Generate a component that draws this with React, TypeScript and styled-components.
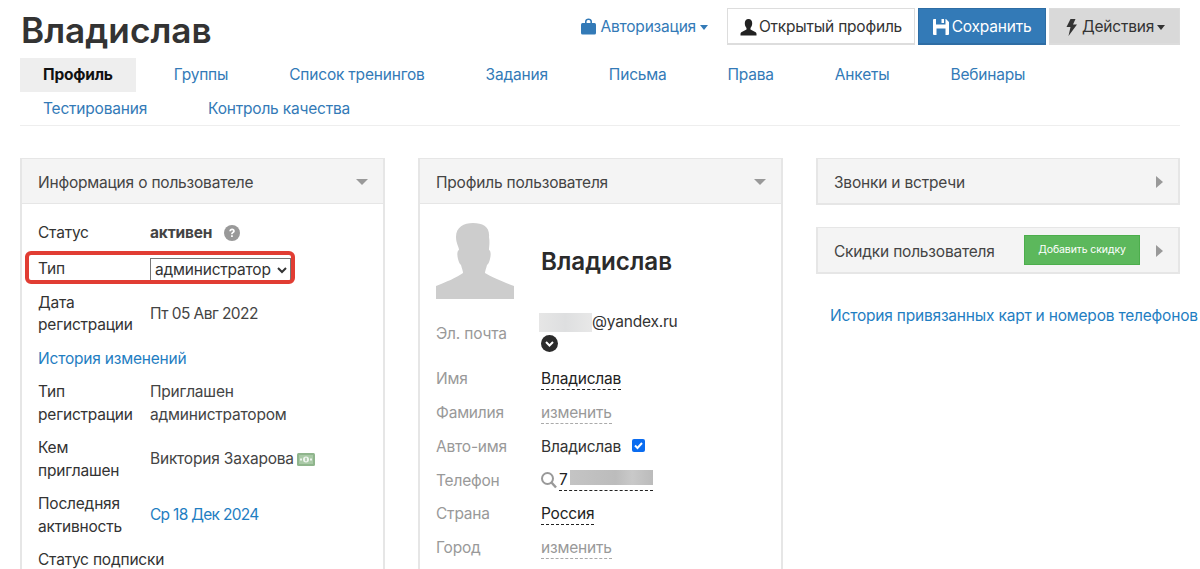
import React from "react";
import styled, { createGlobalStyle } from "styled-components";

const Global = createGlobalStyle`
  html, body { margin: 0; padding: 0; background: #fff; height: 569px; overflow: hidden; }
  body { font-family: Inter, "Noto Sans", sans-serif; font-size: 15.5px; line-height: 22.5px; letter-spacing: -0.2px; color: #333; }
`;

const Page = styled.div`
  width: 1200px;
  height: 569px;
  overflow: hidden;
  padding: 0 20px;
  box-sizing: border-box;
`;
const Header = styled.header`
  display: flex;
  justify-content: space-between;
  align-items: flex-start;
  height: 58px;
`;
const Title = styled.h1`
  margin: 9px 0 0 1px;
  font-size: 35.2px;
  line-height: 42px;
  font-weight: 600;
  letter-spacing: 0;
  color: #333;
`;
const Actions = styled.div`
  display: flex;
  align-items: center;
  padding-top: 8px;
  gap: 3px;
`;
const AuthLink = styled.a`
  display: flex;
  align-items: center;
  gap: 4px;
  color: #337ab7;
  margin-right: 16px;
  padding-top: 1px;
`;
const Caret = styled.span<{ $ml?: number }>`
  display: inline-block;
  width: 0;
  height: 0;
  margin-left: ${p => p.$ml ?? 3}px;
  vertical-align: 2px;
  border-left: 4.5px solid transparent;
  border-right: 4.5px solid transparent;
  border-top: 5px solid currentColor;
`;
const Btn = styled.button<{ $kind: "white" | "blue" | "grey"; $w: number }>`
  display: flex;
  align-items: center;
  justify-content: ${p => (p.$kind === "grey" ? "flex-start" : "center")};
  gap: ${p => (p.$kind === "grey" ? 5 : p.$kind === "blue" ? 3 : 2)}px;
  width: ${p => p.$w}px;
  height: 37px;
  padding: 2px 0 0 ${p => (p.$kind === "grey" ? 16 : 0)}px;
  box-sizing: border-box;
  font: inherit;
  letter-spacing: -0.2px;
  border-radius: 0;
  color: ${p => (p.$kind === "blue" ? "#fff" : "#333")};
  background: ${p => (p.$kind === "blue" ? "#337ab7" : p.$kind === "grey" ? "#d9d9d9" : "#fff")};
  border: 1px solid ${p => (p.$kind === "blue" ? "#2e6da4" : p.$kind === "grey" ? "#dcdcdc" : "#ddd")};
  border-bottom-width: 2px;
`;
const Tabs = styled.nav`
  display: flex;
  flex-wrap: wrap;
  border-bottom: 1px solid #eee;
  height: 68px;
  box-sizing: border-box;
  align-content: flex-start;
`;
const Tab = styled.a<{ $active?: boolean }>`
  display: block;
  height: 34px;
  line-height: 34px;
  padding: 0 23px;
  margin-right: 15px;
  box-sizing: border-box;
  white-space: nowrap;
  color: ${p => (p.$active ? "#111" : "#337ab7")};
  background: ${p => (p.$active ? "#eee" : "transparent")};
  font-weight: ${p => (p.$active ? 700 : 400)};
`;
const Columns = styled.div`
  display: flex;
  gap: 33px;
  margin-top: 32px;
  align-items: flex-start;
`;
const Column = styled.div<{ $w: number }>`
  width: ${p => p.$w}px;
  flex: none;
`;
const Panel = styled.section`
  border-style: solid;
  border-width: 1px 2px 2px;
  border-color: #e6e6e6;
  box-sizing: border-box;
  margin-bottom: 22px;
`;
const PanelHead = styled.div`
  display: flex;
  align-items: center;
  height: 44px;
  padding: 4px 16px 0;
  box-sizing: border-box;
  background: #f4f4f4;
  color: #444;
`;
const HeadTitle = styled.span`
  flex: 1;
`;
const DownArrow = styled.span`
  width: 0;
  height: 0;
  margin: -2px -1px 0 0;
  border-left: 6.5px solid transparent;
  border-right: 6.5px solid transparent;
  border-top: 6.5px solid #999;
`;
const RightArrow = styled.span`
  width: 0;
  height: 0;
  margin: -3px -1px 0 0;
  border-top: 6.5px solid transparent;
  border-bottom: 6.5px solid transparent;
  border-left: 7px solid #999;
`;
const PanelBody = styled.div`
  border-top: 1px solid #e6e6e6;
  padding: 18px 16px 0;
  height: 400px;
  position: relative;
`;
const InfoRow = styled.div<{ $mt?: number }>`
  display: grid;
  grid-template-columns: 112px 1fr;
  align-items: center;
  margin-top: ${p => p.$mt ?? 11}px;
`;
const InfoLabel = styled.div``;
const SubStatus = styled.div`
  margin-top: 11px;
`;
const InfoValue = styled.div<{ $link?: boolean; $bold?: boolean; $ls?: number }>`
  display: flex;
  align-items: center;
  color: ${p => (p.$link ? "#1f7ec2" : "#444")};
  font-weight: ${p => (p.$bold ? 700 : 400)};
  letter-spacing: ${p => p.$ls ?? -0.2}px;
`;
const Link = styled.a<{ $mt?: number; $ml?: number }>`
  display: block;
  color: #1f7ec2;
  margin-top: ${p => p.$mt ?? 11}px;
  margin-left: ${p => p.$ml ?? 0}px;
  white-space: nowrap;
`;
const TypeSelect = styled.select`
  width: 141px;
  height: 24px;
  font: inherit;
  letter-spacing: -0.2px;
  color: #333;
  background: #fff;
  padding: 0;
  border: 1px solid #767676;
  border-radius: 0;
`;
const Highlight = styled.div`
  position: absolute;
  left: 3px;
  top: 47px;
  width: 262px;
  height: 25px;
  border: 4px solid #e13d33;
  border-radius: 6px;
  pointer-events: none;
`;
const HelpIcon = styled.span`
  display: inline-flex;
  margin-left: 12px;
`;
const ProfileTop = styled.div`
  display: flex;
  align-items: center;
  gap: 27px;
  margin: 1px 0 1.5px;
`;
const ProfileName = styled.div`
  font-size: 24.2px;
  line-height: 30px;
  font-weight: 600;
  letter-spacing: 0;
  color: #2b2b2b;
  margin-top: 2px;
`;
const FieldRow = styled.div<{ $h?: number }>`
  display: grid;
  grid-template-columns: 105px 1fr;
  align-items: center;
  min-height: ${p => p.$h ?? 33.8}px;
`;
const FieldLabel = styled.div<{ $pt?: number }>`
  color: #999;
  padding-top: ${p => p.$pt ?? 0}px;
`;
const FieldValue = styled.div`
  display: flex;
  align-items: center;
  color: #333;
`;
const Editable = styled.span<{ $muted?: boolean }>`
  color: ${p => (p.$muted ? "#999" : "#222")};
  border-bottom: 1px dashed ${p => (p.$muted ? "#aaa" : "#222")};
  line-height: 20px;
`;
const EmailBox = styled.div`
  display: flex;
  flex-direction: column;
  align-items: flex-start;
`;
const Blur = styled.span<{ $w: number; $h: number; $bg: string; $ml?: number }>`
  display: inline-block;
  width: ${p => p.$w}px;
  height: ${p => p.$h}px;
  margin-left: ${p => p.$ml ?? 0}px;
  background: ${p => p.$bg};
`;
const CircleBtn = styled.span`
  display: flex;
  margin-top: 1px;
`;
const Check = styled.span`
  display: inline-flex;
  align-items: center;
  justify-content: center;
  width: 13px;
  height: 13px;
  margin-left: 11px;
  margin-top: -3px;
  border-radius: 2px;
  background: #0a6cf0;
`;
const GreenBtn = styled.button`
  width: 116px;
  height: 30px;
  margin: -4px 16px 0 0;
  padding: 0;
  font: inherit;
  font-size: 10.5px;
  letter-spacing: -0.1px;
  color: #fff;
  background: #5cb85c;
  border: 1px solid #4cae4c;
  border-radius: 0;
`;

const Lock = () => (
  <svg width="15" height="18" viewBox="0 0 15 18" fill="#337ab7">
    <path d="M4 5V3.500C4 1.600 5.600 .5 7.500 .5S11 1.600 11 3.500V5H9.400V3.600C9.400 2.700 8.600 2.100 7.500 2.100S5.600 2.700 5.600 3.600V5z" />
    <rect x="0" y="5" width="15" height="11.500" rx="1.500" />
  </svg>
);
const UserIcon = () => (
  <svg width="17" height="17" viewBox="0 0 16 17" fill="#222">
    <path d="M8 0C5.500 0 4.300 1.800 4.300 4.200c0 2 .8 3.600 1.700 4.700v1.600L.8 13.200C.2 13.600 0 14.200 0 15v1.500h16V15c0-.8-.2-1.400-.8-1.800L10 10.500V8.900c.9-1.100 1.700-2.700 1.700-4.700C11.700 1.800 10.500 0 8 0z" />
  </svg>
);
const Floppy = () => (
  <svg width="16" height="16" viewBox="0 0 16 16" fill="#fff">
    <path fillRule="evenodd" d="M1 0h2v5.500h9.500V0h.5l3 3v12a1 1 0 0 1-1 1H1a1 1 0 0 1-1-1V1a1 1 0 0 1 1-1zM3.500 9.500V16h9V9.500zM8.500 0h2.500v4H8.500z" />
  </svg>
);
const Bolt = () => (
  <svg width="11" height="17" viewBox="0 0 11 17" fill="#333">
    <path d="M4.500 0H9.500L7 5.500H11L2.500 17L4.500 8H.5z" />
  </svg>
);
const Help = () => (
  <svg width="16" height="16" viewBox="0 0 16 16">
    <circle cx="8" cy="8" r="8" fill="#999" />
    <path d="M5.300 6.200C5.400 4.600 6.500 3.600 8.100 3.600c1.600 0 2.700 1 2.700 2.300 0 1.100-.6 1.600-1.300 2.100-.6.400-.8.700-.8 1.300H7.100c0-1.100.4-1.700 1.100-2.200.6-.4.9-.7.9-1.100 0-.5-.4-.8-1-.8-.7 0-1.100.4-1.200 1zM7.100 10.300h1.700V12H7.100z" fill="#fff" />
  </svg>
);
const Money = () => (
  <svg width="18" height="13" viewBox="0 0 18 13" style={{ marginLeft: 3 }}>
    <rect width="18" height="13" rx="1.500" fill="#8fb58c" />
    <rect x="2" y="2" width="14" height="9" fill="#a9c9a6" />
    <circle cx="9" cy="6.500" r="3" fill="#eef4ee" />
    <rect x="8.400" y="4.800" width="1.200" height="3.400" fill="#8fb58c" />
    <rect x="3" y="5.500" width="2" height="2" fill="#eef4ee" />
    <rect x="13" y="5.500" width="2" height="2" fill="#eef4ee" />
  </svg>
);
const Silhouette = () => (
  <svg width="78" height="76" viewBox="0 0 78 76" fill="#cdcdcd">
    <path d="M20 14C20 4 28 0 37 0C47 0 54 4 53 14C54 20 53 24 53 27C55 28 55 32 54 36C53 40 52 41 51 42C50 46 49 48 49 50C55 54 70 60 78 63V76H0V63C8 60 22 54 27 50C27 48 26 46 25 42C24 41 23 40 22 36C21 32 21 28 23 27C23 24 20 20 20 14z" />
  </svg>
);
const Chevron = () => (
  <svg width="17" height="17" viewBox="0 0 17 17">
    <circle cx="8.500" cy="8.500" r="8.500" fill="#2b2b2b" />
    <path d="M5 7l3.500 3.500L12 7" fill="none" stroke="#fff" strokeWidth="2" />
  </svg>
);
const Search = () => (
  <svg width="16" height="17" viewBox="0 0 16 17" fill="none" stroke="#999" strokeWidth="2" style={{ marginRight: 2 }}>
    <circle cx="6.500" cy="6.500" r="5.500" />
    <path d="M10.500 10.500l4.500 5" strokeWidth="2.500" />
  </svg>
);
const Tick = () => (
  <svg width="11" height="11" viewBox="0 0 11 11" fill="none" stroke="#fff" strokeWidth="2">
    <path d="M2 5.500l2.500 2.500L9 3" />
  </svg>
);

const tabs = ["Группы", "Список тренингов", "Задания", "Письма", "Права", "Анкеты", "Вебинары", "Тестирования", "Контроль качества"];

export default function App() {
  return (
    <Page>
      <Global />
      <Header>
        <Title>Владислав</Title>
        <Actions>
          <AuthLink><Lock />Авторизация<Caret $ml={0} /></AuthLink>
          <Btn $kind="white" $w={188}><UserIcon />Открытый профиль</Btn>
          <Btn $kind="blue" $w={128}><Floppy />Сохранить</Btn>
          <Btn $kind="grey" $w={131}><Bolt /><span>Действия<Caret /></span></Btn>
        </Actions>
      </Header>
      <Tabs>
        <Tab $active>Профиль</Tab>
        {tabs.map(t => <Tab key={t}>{t}</Tab>)}
      </Tabs>
      <Columns>
        <Column $w={365}>
          <Panel>
            <PanelHead><HeadTitle>Информация о пользователе</HeadTitle><DownArrow /></PanelHead>
            <PanelBody>
              <InfoRow $mt={0}><InfoLabel>Статус</InfoLabel><InfoValue $bold>активен<HelpIcon><Help /></HelpIcon></InfoValue></InfoRow>
              <InfoRow $mt={13}>
                <InfoLabel>Тип</InfoLabel>
                <InfoValue><TypeSelect defaultValue="a"><option value="a">администратор</option></TypeSelect></InfoValue>
              </InfoRow>
              <InfoRow $mt={10}><InfoLabel>Дата регистрации</InfoLabel><InfoValue $ls={-0.55}>Пт 05 Авг 2022</InfoValue></InfoRow>
              <Link>История изменений</Link>
              <InfoRow><InfoLabel>Тип регистрации</InfoLabel><InfoValue>Приглашен администратором</InfoValue></InfoRow>
              <InfoRow><InfoLabel>Кем приглашен</InfoLabel><InfoValue>Виктория Захарова<Money /></InfoValue></InfoRow>
              <InfoRow><InfoLabel>Последняя активность</InfoLabel><InfoValue $link $ls={-0.7}>Ср 18 Дек 2024</InfoValue></InfoRow>
              <SubStatus>Статус подписки</SubStatus>
              <Highlight />
            </PanelBody>
          </Panel>
        </Column>
        <Column $w={365}>
          <Panel>
            <PanelHead><HeadTitle>Профиль пользователя</HeadTitle><DownArrow /></PanelHead>
            <PanelBody>
              <ProfileTop><Silhouette /><ProfileName>Владислав</ProfileName></ProfileTop>
              <FieldRow $h={62}>
                <FieldLabel $pt={6}>Эл. почта</FieldLabel>
                <EmailBox>
                  <FieldValue><Blur $w={53} $h={19} $ml={-2} $bg="linear-gradient(90deg,#e6e6e6,#dedfe0 50%,#e8e8e8)" />@yandex.ru</FieldValue>
                  <CircleBtn><Chevron /></CircleBtn>
                </EmailBox>
              </FieldRow>
              <FieldRow><FieldLabel>Имя</FieldLabel><FieldValue><Editable>Владислав</Editable></FieldValue></FieldRow>
              <FieldRow><FieldLabel>Фамилия</FieldLabel><FieldValue><Editable $muted>изменить</Editable></FieldValue></FieldRow>
              <FieldRow><FieldLabel>Авто-имя</FieldLabel><FieldValue>Владислав<Check><Tick /></Check></FieldValue></FieldRow>
              <FieldRow><FieldLabel>Телефон</FieldLabel><FieldValue><Search /><Editable>7<Blur $w={83} $h={15} $ml={2} $bg="linear-gradient(90deg,#c4c4c4,#bcbcbc 55%,#c9c9c9 75%,#bbb)" /></Editable></FieldValue></FieldRow>
              <FieldRow><FieldLabel>Страна</FieldLabel><FieldValue><Editable>Россия</Editable></FieldValue></FieldRow>
              <FieldRow><FieldLabel>Город</FieldLabel><FieldValue><Editable $muted>изменить</Editable></FieldValue></FieldRow>
            </PanelBody>
          </Panel>
        </Column>
        <Column $w={364}>
          <Panel><PanelHead><HeadTitle>Звонки и встречи</HeadTitle><RightArrow /></PanelHead></Panel>
          <Panel><PanelHead><HeadTitle>Скидки пользователя</HeadTitle><GreenBtn>Добавить скидку</GreenBtn><RightArrow /></PanelHead></Panel>
          <Link $mt={31} $ml={14}>История привязанных карт и номеров телефонов</Link>
        </Column>
      </Columns>
    </Page>
  );
}
